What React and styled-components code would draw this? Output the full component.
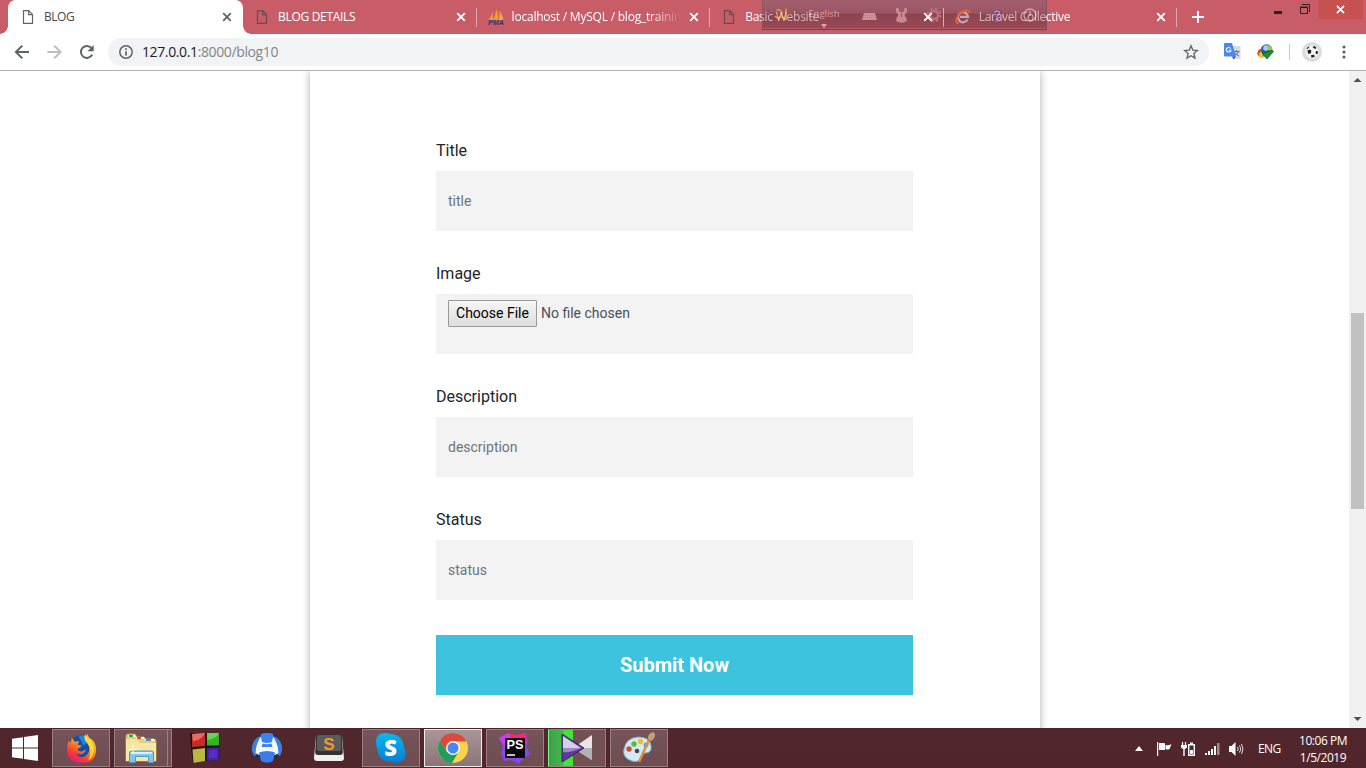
import React from "react";
import styled, { createGlobalStyle, css } from "styled-components";

const GlobalStyle = createGlobalStyle`
  * { box-sizing: border-box; }
  html, body { margin: 0; padding: 0; overflow: hidden; background: #fff; }
  svg { display: block; flex: none; }
`;

const Screen = styled.div`
  display: flex;
  flex-direction: column;
  width: 1366px;
  height: 768px;
  overflow: hidden;
  font-family: "Open Sans", "Noto Sans", sans-serif;
`;

/* ---------- Tab strip ---------- */
const TabStrip = styled.header`
  position: relative;
  flex: none;
  display: flex;
  height: 34px;
  padding-left: 8px;
  background: #c95d67;
`;

const TabItem = styled.div`
  position: relative;
  z-index: 1;
  display: flex;
  align-items: center;
  flex: none;
  width: ${(p) => (p.$active ? 234 : 233.6)}px;
  height: 34px;
  padding: 0 7px 0 12px;
  color: ${(p) => (p.$active ? "#45494d" : "#fff")};
  ${(p) =>
    p.$active &&
    css`
      background: #fff;
      border-radius: 8px 8px 0 0;
      box-shadow: 1px 0 #fff;
      &::before,
      &::after {
        content: "";
        position: absolute;
        bottom: 0;
        width: 8px;
        height: 8px;
      }
      &::before {
        left: -8px;
        background: radial-gradient(circle at 0 0, transparent 7.5px, #fff 8px);
      }
      &::after {
        right: -9px;
        background: radial-gradient(circle at 100% 0, transparent 7.5px, #fff 8px);
      }
    `}
`;

const TabTitle = styled.span`
  flex: 1;
  margin: 0 6px 0 8px;
  overflow: hidden;
  white-space: nowrap;
  font-size: 12px;
  line-height: 18px;
  letter-spacing: ${(p) => p.$spacing || 0}px;
  ${(p) => p.$mask && `mask-image: ${p.$mask};`}
`;

const TabDivider = styled.i`
  position: absolute;
  right: -1px;
  top: 8px;
  width: 1px;
  height: 19px;
  background: #e2a6ab;
`;

const NewTab = styled.div`
  display: flex;
  align-items: center;
  padding-left: 15px;
`;

const WindowControls = styled.div`
  display: flex;
  margin-left: auto;
  margin-right: 3px;
  height: 19px;
`;

const WindowButton = styled.div`
  display: flex;
  align-items: center;
  justify-content: center;
  width: ${(p) => p.$width}px;
  height: 19px;
  padding-bottom: ${(p) => p.$lift || 0}px;
  background: ${(p) => (p.$danger ? "#c75050" : "transparent")};
`;

const LanguageBar = styled.div`
  position: absolute;
  left: 762px;
  top: 0;
  display: flex;
  align-items: flex-start;
  width: 285px;
  height: 30px;
  border: 1px solid rgba(130, 80, 98, 0.6);
  border-top: 0;
  border-bottom: 1px solid rgba(85, 45, 58, 0.6);
  box-shadow: inset 0 -1px rgba(190, 120, 135, 0.5);
  background: linear-gradient(
    rgba(125, 95, 118, 0.5) 0,
    rgba(112, 78, 100, 0.52) 13px,
    rgba(82, 42, 56, 0.5) 14px,
    rgba(108, 50, 68, 0.48) 30px
  );
`;

const LanguageName = styled.div`
  display: flex;
  flex-direction: column;
  align-items: center;
  width: 36px;
  margin-left: 18px;
  padding-top: 7px;
  color: #dd9ca7;
  font-size: 9.5px;
  line-height: 14px;
  svg { margin-top: 3px; }
`;

const LanguageTool = styled.div`
  display: flex;
  margin: ${(p) => p.$top || 7}px 0 0 ${(p) => p.$left}px;
`;

/* ---------- Toolbar ---------- */
const Toolbar = styled.div`
  flex: none;
  display: flex;
  align-items: center;
  height: 37px;
  padding: 0 20px 1px 14px;
  border-bottom: 1px solid #b0b0b0;
  background: #fff;
`;

const NavButtons = styled.nav`
  flex: none;
  display: flex;
  gap: 16px;
  width: 94px;
`;

const AddressBar = styled.div`
  flex: none;
  display: flex;
  align-items: center;
  width: 1101px;
  height: 28px;
  padding: 0 10px;
  border-radius: 14px;
  background: #f1f3f4;
`;

const Url = styled.span`
  flex: 1;
  margin-left: 8px;
  color: #80868b;
  font-size: 14px;
  line-height: 20px;
  letter-spacing: -0.38px;
  b { color: #202124; font-weight: 400; }
`;

const Extensions = styled.div`
  display: flex;
  align-items: center;
  margin-left: 15px;
  gap: 16px;
`;

const ExtensionDivider = styled.i`
  width: 1px;
  height: 16px;
  margin: 0 -4px 0 -1px;
  background: #c8cacc;
`;

const MenuButton = styled.div`
  margin-left: 4px;
`;

/* ---------- Page ---------- */
const Viewport = styled.div`
  display: flex;
  flex: 1;
  min-height: 0;
  overflow: hidden;
`;

const Page = styled.main`
  flex: 1;
  overflow: hidden;
  background: #fff;
  font-family: Roboto, sans-serif;
`;

const Card = styled.form`
  width: 730px;
  height: 720px;
  margin-left: 310px;
  padding: 68px 127px 0 126px;
  background: #fff;
  box-shadow: 0 0 8px rgba(0, 0, 0, 0.32);
`;

const Field = styled.div`
  margin-bottom: 31px;
`;

const Label = styled.label`
  display: block;
  margin-bottom: 8px;
  color: #212529;
  font-size: 16px;
  line-height: 24px;
`;

const fieldBox = css`
  display: flex;
  width: 477px;
  height: 60px;
  padding: 6px 12px;
  border: 0;
  background: #f3f3f3;
  font-family: Roboto, sans-serif;
  font-size: 14px;
`;

const TextInput = styled.input`
  ${fieldBox}
  &::placeholder { color: #6c757d; opacity: 1; }
`;

const FileInput = styled.div`
  ${fieldBox}
  gap: 4px;
  color: #495057;
  line-height: 26px;
`;

const FileButton = styled.span`
  width: 89px;
  height: 27px;
  border: 1px solid #999;
  border-radius: 1px;
  background: linear-gradient(#f6f6f6, #dedede);
  color: #000;
  line-height: 24px;
  text-align: center;
`;

const Submit = styled.button`
  display: block;
  width: 477px;
  height: 60px;
  margin-top: 35px;
  padding: 0;
  border: 0;
  background: #3dc3dd;
  color: #fff;
  font: 700 20px/60px Roboto, sans-serif;
`;

const Scrollbar = styled.div`
  display: flex;
  flex-direction: column;
  align-items: center;
  width: 17px;
  padding: 6px 0;
  background: #f1f1f1;
`;

const ScrollThumb = styled.div`
  width: 13px;
  height: 196px;
  margin: 230px 0 auto;
  background: #c1c1c1;
`;

/* ---------- Taskbar ---------- */
const Taskbar = styled.footer`
  flex: none;
  display: flex;
  align-items: center;
  height: 40px;
  background: linear-gradient(#482127 0, #50272c 2px, #50262c 100%);
`;

const StartButton = styled.div`
  width: 52px;
  padding-left: 12px;
`;

const AppList = styled.div`
  display: flex;
  gap: 4px;
`;

const tones = {
  idle: css`
    border: 1px solid transparent;
  `,
  open: css`
    border: 1px solid #9b8083;
    background: linear-gradient(#75545a, #6e4c50);
  `,
  focused: css`
    border: 1px solid #f2eeee;
    background: linear-gradient(#a99698, #8a7477);
  `,
  playing: css`
    border: 1px solid #9b8083;
    border-left-color: #7cf58b;
    background: linear-gradient(90deg, #3da04a 0, #46b84a 14px, #42e437 15px, #42e437 24px, #725054 24px);
  `,
};

const AppButton = styled.div`
  position: relative;
  display: flex;
  align-items: center;
  justify-content: center;
  width: 58px;
  height: 38px;
  ${(p) => tones[p.$tone]}
  ${(p) =>
    p.$stacked &&
    css`
      padding-right: 5px;
      &::after {
        content: "";
        position: absolute;
        top: 0;
        bottom: 0;
        right: 3px;
        width: 1px;
        background: #9b8083;
      }
    `}
`;

const Tray = styled.div`
  display: flex;
  align-items: center;
  margin-left: auto;
  padding-right: 19px;
  color: #fff;
  font-size: 12px;
`;

const TrayIcon = styled.div`
  width: ${(p) => p.$width}px;
  padding-top: 1px;
`;

const InputLanguage = styled.span`
  width: 41px;
  letter-spacing: -0.55px;
`;

const Clock = styled.div`
  width: 48px;
  padding-top: 1px;
  text-align: center;
  line-height: 17px;
  letter-spacing: -0.45px;
  white-space: nowrap;
`;

/* ---------- Icons ---------- */
const FileIcon = ({ color = "#5f6368" }) => (
  <svg width="16" height="16" viewBox="0 0 16 16" fill="none" stroke={color} strokeWidth="1.2">
    <path d="M3.5 1.6h5.2l3.8 3.8v9h-9z M8.6 1.6v4h3.9" />
  </svg>
);

const CloseIcon = ({ color = "#fff", size = 16 }) => (
  <svg width={size} height={size} viewBox="0 0 16 16" stroke={color} strokeWidth="1.8">
    <path d="M4.2 4.2l7.6 7.6M11.8 4.2l-7.6 7.6" />
  </svg>
);

const PmaIcon = () => (
  <svg width="16" height="16" viewBox="0 0 16 16">
    <path d="M.5 11Q4 6 4.5 2.5L5 11z" fill="#e9a23b" />
    <path d="M5 11Q8 6 8 0Q11 6 10 11z" fill="#f59b22" />
    <path d="M10.5 11Q12 7 11.5 1.5Q15 7 15.5 11z" fill="#f3a63a" />
    <text x="0" y="15.6" fontFamily="Liberation Sans" fontSize="6.5" fontWeight="700" fontStyle="italic" textLength="16" lengthAdjust="spacingAndGlyphs" fill="#34386e">PMA</text>
  </svg>
);

const IeIcon = () => (
  <svg width="16" height="16" viewBox="0 0 16 16" fill="none">
    <path d="M12.5 10.5A5 5 0 1 1 13 7.800H5" stroke="#c0a9bd" strokeWidth="2.2" />
    <path d="M14.500 4C15 0 8 1 4 5.500 0 10 0 15 4 14" stroke="#e5622f" strokeWidth="2" />
  </svg>
);

const BackIcon = ({ color = "#5f6368", flip }) => (
  <svg width={flip ? 17 : 16} height="16" viewBox="0 0 16 16" fill="none" stroke={color} strokeWidth="2">
    <path transform={flip ? "translate(16 0) scale(-1 1)" : undefined} d="M15 8H2.500M8.300 1.600L1.900 8l6.400 6.400" />
  </svg>
);

const ReloadIcon = () => (
  <svg width="16" height="16" viewBox="0 0 16 16">
    <path d="M13.200 10.800A6 6 0 1 1 12.500 4" fill="none" stroke="#5f6368" strokeWidth="2" />
    <path d="M14.700 1v6.300H8.400z" fill="#5f6368" />
  </svg>
);

const InfoIcon = () => (
  <svg width="16" height="16" viewBox="0 0 16 16">
    <circle cx="8" cy="8" r="6.200" fill="none" stroke="#5f6368" strokeWidth="1.500" />
    <path d="M8 7.300v4.200M8 4.300v1.700" stroke="#5f6368" strokeWidth="1.700" />
  </svg>
);

const StarIcon = () => (
  <svg width="16" height="16" viewBox="0 0 16 16" fill="none" stroke="#5f6368" strokeWidth="1.300">
    <path d="M8 1.800l1.800 4.300 4.700.4-3.600 3 1.100 4.600L8 11.700l-4 2.400 1.100-4.600-3.600-3 4.700-.4z" />
  </svg>
);

const TranslateIcon = () => (
  <svg width="17" height="17" viewBox="0 0 17 17">
    <path d="M6 3h10.500v13H9z" fill="#d7dade" />
    <path d="M9.500 8.500h6M12.500 7v1.500M14.500 8.500q-1 3-4 4.500M11 9.500q1.500 2.500 4 3.500" stroke="#62788a" fill="none" />
    <path d="M1 0h7l4 13.500H1q-1 0-1-1V1q0-1 1-1z" fill="#4a87ee" />
    <path d="M8 13.500h4l-2.500 3z" fill="#3b52c4" />
    <path d="M6.600 5.500A2.300 2.300 0 1 0 6.900 7.300H5" stroke="#fff" strokeWidth="1.100" fill="none" />
  </svg>
);

const GlobeArrowIcon = () => (
  <svg width="17" height="16" viewBox="0 0 17 16">
    <circle cx="9.500" cy="6" r="5.800" fill="#2560b4" />
    <circle cx="9" cy="4" r="2.800" fill="#a9d2f2" />
    <path d="M11 1q4 1 4.600 4l-2.500 2-3-2z" fill="#a9bf40" />
    <path d="M4.500 4Q-1 7 1 12q4 4 9 0l-1-2q-5 2-5.500-2z" fill="#e8c21e" />
    <path d="M3 5q-4 3-1.500 7Q2 8 5 6z" fill="#c53c24" />
    <path d="M5 8.500q3 1.500 5-.5l5.500-1.500 1 1L9.800 15l-1-2Q6 12 5 8.500z" fill="#159825" stroke="#07520e" strokeWidth=".7" />
  </svg>
);

const BallIcon = () => (
  <svg width="20" height="20" viewBox="0 0 20 20">
    <circle cx="10" cy="10" r="10" fill="#dcdcdc" />
    <circle cx="10" cy="10" r="6.500" fill="#f4f4f4" />
    <path d="M5.500 8.500l2.500-1 1.500 1.500-1 2.500-2.500.2zM10.500 5l2-1 2 2-1.500 1zM14 9l2 .2-.5 3-2-.8zM9 13.200l3-.4.8 2-3.300 1zM4.500 6.500l2-2 1 .6-2 2z" fill="#1c1c1c" />
  </svg>
);

const DotsIcon = () => (
  <svg width="4" height="14" viewBox="0 0 4 14" fill="#5f6368">
    <circle cx="2" cy="2" r="1.600" /><circle cx="2" cy="7" r="1.600" /><circle cx="2" cy="12" r="1.600" />
  </svg>
);

const ScrollArrow = ({ down }) => (
  <svg width="9" height="6" viewBox="0 0 9 6" fill="#505050">
    <path d={down ? "M.5 1h8l-4 4z" : "M.5 5h8l-4-4z"} />
  </svg>
);

const WindowsIcon = () => (
  <svg width="26" height="26" viewBox="0 0 26 26" fill="#fff">
    <path d="M0 3.700l11-1.500v10.300H0zM12 2L26 0v12.500H12zM0 13.500h11v10.300L0 22.300zM12 13.500h14V26l-14-2z" />
  </svg>
);

const FirefoxIcon = () => (
  <svg width="31" height="31" viewBox="0 0 32 32">
    <defs>
      <linearGradient id="fox" x1=".8" y1="0" x2=".2" y2="1">
        <stop offset="0" stopColor="#ffe226" /><stop offset=".4" stopColor="#ff9a16" /><stop offset=".75" stopColor="#f7363c" /><stop offset="1" stopColor="#e3168c" />
      </linearGradient>
    </defs>
    <circle cx="16" cy="13.500" r="11.500" fill="#164da5" />
    <path d="M13 3q8-3 11 6l-6 4z" fill="#1d87df" />
    <path d="M3 8l2 2 1-5 3 4q3-1 5 0-2 1-2 3l4 1q-1 3-4 3 0 3 4 3 2 0 4-2 1 1-1 3-4 4-9 1 4 6 10 3 5-3 4-10-1-4-4-7 0-3 2-6 1 4 5 6 4 4 4 10Q31 31 16 31 1 30 1 17q0-5 2-9z" fill="url(#fox)" />
    <path d="M20 1q1 4 5 6 5 6 3 14-1 5-5 7 4-8 1-14-2-4-4-6-2-3 0-7z" fill="#ffdc35" />
  </svg>
);

const FolderIcon = () => (
  <svg width="34" height="32" viewBox="0 0 34 32">
    <path d="M2 29V4q0-2 2-2h7l2 3h7l1 2h9q2 0 2 2v20z" fill="#e8cc76" stroke="#bf9e48" />
    <path d="M4 3h7l1 2H4zM12 5h8l1 2h-9zM21 7h9l1 2H22z" fill="#fff" />
    <path d="M5 3h4v2H5z" fill="#15b923" /><path d="M13 5h4v2h-4z" fill="#d34f35" /><path d="M22 7h5v2h-5z" fill="#3490df" />
    <path d="M2 29V7q12-1 14 4h16v18z" fill="#f8e6a4" />
    <path d="M5.500 30.500V21q0-2 2-2h20q2 0 2 2v9.500h-5v-6h-13v6z" fill="#84c6ea" stroke="#4f9bc6" />
    <path d="M7 21h21" stroke="#d9f2fa" strokeWidth="2" />
    <path d="M9 13v9M5 17.500h8" stroke="#fff" strokeWidth=".9" />
  </svg>
);

const BlocksIcon = () => (
  <svg width="30" height="32" viewBox="0 0 30 32">
    <path d="M0 1h29.500v27L14 29 3 31.500 1 16z" fill="#191313" />
    <path d="M2 2l13-1v13L2 15z" fill="#ca2a26" /><path d="M2 2l13-1Q12 8 3 9z" fill="#e96a62" />
    <path d="M17 1h12v12.500H17z" fill="#32b425" /><path d="M17 1h12Q26 7 17 8z" fill="#65d255" />
    <path d="M2.500 17.500l12.500-1.500v13L3.500 31z" fill="#bdb63c" />
    <path d="M17 16l12-.5V28l-12 1z" fill="#4421a5" /><path d="M19 18l8-.5v8l-8 1z" fill="#5631bd" />
  </svg>
);

const HeadsetIcon = () => (
  <svg width="32" height="30" viewBox="0 0 32 30">
    <path d="M7 3Q16-3 25 3q6 5 6 13l-1.500 6Q24 26 16 22 8 26 2.500 22L1 16Q1 8 7 3z" fill="#172f50" />
    <path d="M7 4Q0 9 1 18l2 5 2.500-1Q6 12 11 3zM25 4q7 5 6 14l-2 5-2.500-1Q26 12 21 3z" fill="#3f7fdc" />
    <path d="M11 2q5-2.500 10 0 6 8 6.500 18L24 22q-8-4-16 0l-3.500-2Q5 10 11 2z" fill="#f4f9ff" />
    <path d="M9.500 1.500q6.500-3.500 13 0L21 9q-5 2-10 0z" fill="#3b82f3" />
    <path d="M11.500 10.500q4.500 1.500 9 0l1 3.500h-11z" fill="#3b82f3" />
    <path d="M8 19.500q8-3 16 0L22 28q-6 3.500-12 0z" fill="#3a7cea" />
  </svg>
);

const SublimeIcon = () => (
  <svg width="30" height="28" viewBox="0 0 30 28">
    <path d="M2 2L0 24q0 3 3 3h24q3 0 3-3L28 2z" fill="#f1f0ee" />
    <path d="M4 0h22q2 0 2 2l.8 16q0 3-2.500 3H3.700q-2.500 0-2.500-3L2 2q0-2 2-2z" fill="#333" />
    <rect x="3" y="1" width="24" height="16" rx="2" fill="#5b5b5b" />
    <text x="15" y="15.500" textAnchor="middle" fontFamily="Liberation Sans" fontWeight="700" fontSize="17" fill="#f79638">S</text>
  </svg>
);

const SkypeIcon = () => (
  <svg width="30" height="30" viewBox="0 0 30 30">
    <defs><linearGradient id="skype" x2="0" y2="1"><stop stopColor="#08b8f1" /><stop offset="1" stopColor="#087bd2" /></linearGradient></defs>
    <path d="M9 0q3 0 5 1 13 0 14 14 1.500 1 1.500 6 0 8-8.500 9-3 0-5-1Q2 29 1 15 0 13 0 9 0 0 9 0z" fill="url(#skype)" />
    <text x="14.500" y="22.500" textAnchor="middle" fontFamily="Open Sans" fontWeight="800" fontSize="22" fill="#fff">S</text>
  </svg>
);

const ChromeIcon = () => (
  <svg width="30" height="30" viewBox="0 0 30 30">
    <circle cx="15" cy="15" r="15" fill="#fdd349" />
    <path d="M2 7.500A15 15 0 0 1 28.500 8.500H15L8.500 18.500z" fill="#dc4a3e" />
    <path d="M2 7.500A15 15 0 0 0 14 30l6.500-11-5.500 3-6.500-3.500z" fill="#1f9e5b" />
    <circle cx="15" cy="15" r="7" fill="#f4f4f4" /><circle cx="15" cy="15" r="5.500" fill="#4688f1" />
  </svg>
);

const PhpStormIcon = () => (
  <svg width="32" height="32" viewBox="0 0 32 32">
    <path d="M0 6l9-5 8 3 10-3 2 10-2 3 4 8-8 6-3 4-8-4-7 1-3-8 2-7z" fill="#8648e8" />
    <path d="M0 6l9-5 8 3 4 3-15 9z" fill="#c83eea" />
    <path d="M9 1l8 2 10-2 1 8H14z" fill="#f82682" />
    <rect x="6" y="6" width="20" height="20" fill="#080808" />
    <text x="7.500" y="17" fontFamily="Liberation Sans" fontWeight="700" fontSize="12.500" textLength="17" lengthAdjust="spacingAndGlyphs" fill="#fff">PS</text>
    <path d="M8 23h8" stroke="#fff" strokeWidth="1.500" />
  </svg>
);

const PlayerIcon = () => (
  <svg width="32" height="28" viewBox="0 0 32 28">
    <path d="M31 1v25L12 14z" fill="#e8e5ea" />
    <path d="M31 14v12L12 14z" fill="#b5b1ba" />
    <path d="M1 0l22 14L1 28z" fill="#5b3c96" stroke="#37265f" />
    <path d="M2 2l18 12H2z" fill="#d8cdec" />
    <path d="M2 14h18q-10 5-18 4z" fill="#9a86c2" />
  </svg>
);

const PaintIcon = () => (
  <svg width="32" height="32" viewBox="0 0 32 32">
    <path d="M1 17Q3 6 15 5q12 0 13 9 1 7-6 7-3 0-4 4-2 6-9 4Q-1 26 1 17z" fill="#d3eaf5" stroke="#7bb1d0" />
    <circle cx="14" cy="19" r="2.300" fill="#4c4148" />
    <circle cx="6" cy="17" r="2.700" fill="#dd4835" /><circle cx="11" cy="12" r="2.700" fill="#5bbb38" />
    <circle cx="17.500" cy="9.500" r="2.700" fill="#f1bd2c" /><circle cx="23" cy="13" r="2.500" fill="#4aabea" />
    <path d="M26 8L16 30" stroke="#e08c36" strokeWidth="2.500" />
    <path d="M25 7q-1-5 5-7l2 2q0 5-4 7z" fill="#c69e76" />
  </svg>
);

const TRAY_ICONS = [
  { id: "more", width: 22, icon: <svg width="8" height="5" viewBox="0 0 8 5"><path d="M0 5l4-5 4 5z" fill="#fff" /></svg> },
  {
    id: "flag", width: 24,
    icon: <svg width="15" height="14" viewBox="0 0 15 14" fill="#fff"><path d="M0 0h1.200v14H0zM2 1h5q1 0 1 1v6H2zM8.500 3q3 1 6-1l-2 5q-2 1-4 0z" /></svg>,
  },
  {
    id: "power", width: 24,
    icon: <svg width="15" height="14" viewBox="0 0 15 14" fill="none" stroke="#fff"><path d="M1.500 0v3M4.500 0v3" strokeWidth="1.200" /><path d="M0 3h6v2.500L4 7H2L0 5.500z" fill="#fff" stroke="none" /><path d="M3 7v7M7.700 2.700h5.600v10.600H7.700z" strokeWidth="1.400" /><path d="M9 1.200h3" strokeWidth="1.400" /><path d="M9.500 8.500h2v3h-2z" fill="#fff" /></svg>,
  },
  {
    id: "network", width: 24,
    icon: <svg width="15" height="12" viewBox="0 0 15 12" fill="#fff"><path d="M0 10h2v2H0zM3 8h2v4H3zM6 6h2v6H6zM9 3h2v9H9z" /><path d="M12 0h2.500v12H12z" fill="#a08a8d" /></svg>,
  },
  {
    id: "volume", width: 29,
    icon: <svg width="15" height="14" viewBox="0 0 15 14"><path d="M0 4h2.500L6.500 0v14l-4-4H0z" fill="#fff" /><path d="M8.500 5q1.500 2 0 4M10.500 3.500q2.500 3.500 0 7M12.500 2q3 5 0 10" fill="none" stroke="#ddd" /></svg>,
  },
];

const TABS = [
  { title: "BLOG", icon: <FileIcon />, active: true, spacing: -0.45 },
  { title: "BLOG DETAILS", icon: <FileIcon color="#6b4a50" />, spacing: -0.3, divider: true },
  {
    title: "localhost / MySQL / blog_training", icon: <PmaIcon />, spacing: -0.22, divider: true,
    mask: "linear-gradient(90deg, #000 82%, transparent 101%)",
  },
  {
    title: "Basic Website", icon: <FileIcon color="#6b4a50" />, spacing: -0.25, divider: true,
    mask: "linear-gradient(90deg, #000 16px, rgba(0, 0, 0, 0.6) 16px)",
  },
  {
    title: "Laravel Collective", icon: <IeIcon />, spacing: -0.3, divider: true,
    mask: "linear-gradient(90deg, rgba(0, 0, 0, 0.6) 67px, #000 67px)",
  },
];

const APPS = [
  { id: "firefox", tone: "open", icon: <FirefoxIcon /> },
  { id: "explorer", tone: "open", stacked: true, icon: <FolderIcon /> },
  { id: "blocks", tone: "idle", icon: <BlocksIcon /> },
  { id: "headset", tone: "idle", icon: <HeadsetIcon /> },
  { id: "sublime", tone: "idle", icon: <SublimeIcon /> },
  { id: "skype", tone: "open", icon: <SkypeIcon /> },
  { id: "chrome", tone: "focused", icon: <ChromeIcon /> },
  { id: "phpstorm", tone: "open", icon: <PhpStormIcon /> },
  { id: "player", tone: "playing", icon: <PlayerIcon /> },
  { id: "paint", tone: "open", icon: <PaintIcon /> },
];

const LanguageOverlay = () => (
  <LanguageBar>
    <LanguageTool $left={11}>
      <svg width="14" height="15" viewBox="0 0 14 15" fill="none" stroke="#e08a35" strokeWidth="1.900"><path d="M1 9q3 4 6 0 2-4-1-6-3-1-3 1M7 8q2 4 5 4M12 1.500v11.500" /></svg>
    </LanguageTool>
    <LanguageName>
      English
      <svg width="6" height="4" viewBox="0 0 6 4"><path d="M0 0h6L3 4z" fill="#e3a3ac" /></svg>
    </LanguageName>
    <LanguageTool $left={20} $top={13}>
      <svg width="15" height="7" viewBox="0 0 15 7"><path d="M2 0h11l2 7H0z" fill="#d18f9d" /><path d="M2 2.500h11M1 4.500h13" stroke="#c07a89" strokeDasharray="1 1" /></svg>
    </LanguageTool>
    <LanguageTool $left={18} $top={8}>
      <svg width="13" height="15" viewBox="0 0 13 15" fill="#cb8794"><path d="M1 0h2.500l1 4h4l1-4H12v4L9.500 7Q12 10 12 13q-5.500 3.500-11 0 0-3 2.500-6L1 4z" /><path d="M6.500 5v4" stroke="#96505f" /></svg>
    </LanguageTool>
    <LanguageTool $left={18}>
      <svg width="16" height="16" viewBox="0 0 16 16" fill="none" stroke="#b87080"><circle cx="8" cy="8" r="4" strokeWidth="2.500" /><circle cx="8" cy="8" r="6.300" strokeWidth="2.200" strokeDasharray="2.500 2.450" /></svg>
    </LanguageTool>
    <LanguageTool $left={47}>
      <svg width="16" height="16" viewBox="0 0 16 16"><circle cx="8" cy="8" r="6.500" fill="#85486e" stroke="#a9627e" /><path d="M5.500 6q0-2 2.500-2t2.500 2Q10.500 7 8 9v1M8 11v2" fill="none" stroke="#c68aa0" strokeWidth="1.500" /></svg>
    </LanguageTool>
    <LanguageTool $left={17}>
      <svg width="16" height="16" viewBox="0 0 16 16" fill="none" stroke="#dc9ca5" strokeWidth="1.400"><circle cx="8" cy="8" r="6" /><path d="M8 4v5" /></svg>
    </LanguageTool>
  </LanguageBar>
);

export default function App() {
  return (
    <Screen>
      <GlobalStyle />
      <TabStrip>
        {TABS.map((tab) => (
          <TabItem key={tab.title} $active={tab.active}>
            {tab.icon}
            <TabTitle $spacing={tab.spacing} $mask={tab.mask}>{tab.title}</TabTitle>
            <CloseIcon color={tab.active ? "#5f6368" : "#fff"} />
            {tab.divider && <TabDivider />}
          </TabItem>
        ))}
        <NewTab>
          <svg width="14" height="14" viewBox="0 0 14 14" stroke="#fff" strokeWidth="2"><path d="M7 1v12M1 7h12" /></svg>
        </NewTab>
        <WindowControls>
          <WindowButton $width={26} $lift={2}>
            <svg width="8" height="12" viewBox="0 0 8 12"><path d="M0 8h8v3H0z" fill="#292023" /></svg>
          </WindowButton>
          <WindowButton $width={27} $lift={1}>
            <svg width="10" height="10" viewBox="0 0 10 10" fill="none" stroke="#292023"><path d="M2 .5h7.500V8M.5 3h7v6.500h-7zM0 3.500h8" /></svg>
          </WindowButton>
          <WindowButton $width={45} $danger>
            <CloseIcon size={15} />
          </WindowButton>
        </WindowControls>
        <LanguageOverlay />
      </TabStrip>
      <Toolbar>
        <NavButtons>
          <BackIcon />
          <BackIcon color="#bbbdbf" flip />
          <ReloadIcon />
        </NavButtons>
        <AddressBar>
          <InfoIcon />
          <Url><b>127.0.0.1</b>:8000/blog10</Url>
          <StarIcon />
        </AddressBar>
        <Extensions>
          <TranslateIcon />
          <GlobeArrowIcon />
          <ExtensionDivider />
          <BallIcon />
          <MenuButton><DotsIcon /></MenuButton>
        </Extensions>
      </Toolbar>
      <Viewport>
        <Page>
          <Card>
            <Field>
              <Label>Title</Label>
              <TextInput placeholder="title" />
            </Field>
            <Field>
              <Label>Image</Label>
              <FileInput><FileButton>Choose File</FileButton>No file chosen</FileInput>
            </Field>
            <Field>
              <Label>Description</Label>
              <TextInput placeholder="description" />
            </Field>
            <Field>
              <Label>Status</Label>
              <TextInput placeholder="status" />
            </Field>
            <Submit type="button">Submit Now</Submit>
          </Card>
        </Page>
        <Scrollbar>
          <ScrollArrow />
          <ScrollThumb />
          <ScrollArrow down />
        </Scrollbar>
      </Viewport>
      <Taskbar>
        <StartButton><WindowsIcon /></StartButton>
        <AppList>
          {APPS.map((app) => (
            <AppButton key={app.id} $tone={app.tone} $stacked={app.stacked}>{app.icon}</AppButton>
          ))}
        </AppList>
        <Tray>
          {TRAY_ICONS.map((item) => (
            <TrayIcon key={item.id} $width={item.width}>{item.icon}</TrayIcon>
          ))}
          <InputLanguage>ENG</InputLanguage>
          <Clock>10:06 PM<br />1/5/2019</Clock>
        </Tray>
      </Taskbar>
    </Screen>
  );
}
